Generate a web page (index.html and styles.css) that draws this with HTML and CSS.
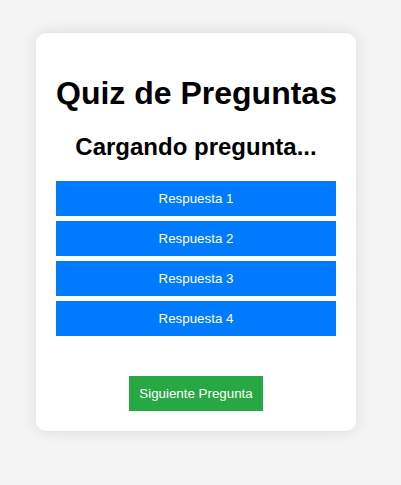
FILE: index.html
```html
<!DOCTYPE html>
<html lang="es">
<head>
<meta charset="UTF-8">
<meta name="viewport" content="width=device-width, initial-scale=1.0">
<title>Quiz de Preguntas</title>
<link rel="stylesheet" href="styles.css">
</head>
<body>
<main class="quiz">
<h1>Quiz de Preguntas</h1>
<h2>Cargando pregunta...</h2>
<div class="answers">
<button class="answer" type="button">Respuesta 1</button>
<button class="answer" type="button">Respuesta 2</button>
<button class="answer" type="button">Respuesta 3</button>
<button class="answer" type="button">Respuesta 4</button>
</div>
<button class="next" type="button">Siguiente Pregunta</button>
</main>
</body>
</html>
```
FILE: styles.css
```css
* {
  box-sizing: border-box;
}

body {
  margin: 0;
  padding: 33px 45px 54px 36px;
  background: #f4f4f4;
  font-family: Arial, "Liberation Sans", sans-serif;
  text-align: center;
}

.quiz {
  max-width: 600px;
  margin: 0 auto;
  padding: 20px;
  background: #fff;
  border-radius: 10px;
  box-shadow: 0 0 15px rgba(0, 0, 0, 0.1);
}

h1 {
  margin: 22px 0 21px;
  font-size: 32px;
  line-height: 37px;
  white-space: nowrap;
}

h2 {
  margin: 20px 0;
  font-size: 24px;
  line-height: 28px;
}

.answers {
  display: flex;
  flex-direction: column;
  gap: 5px;
  margin-bottom: 40px;
}

.answer,
.next {
  padding: 10px;
  border: none;
  color: #fff;
  font-family: inherit;
  line-height: 15px;
  cursor: pointer;
}

.answer {
  background: #007bff;
}

.next {
  background: #28a745;
}
```
